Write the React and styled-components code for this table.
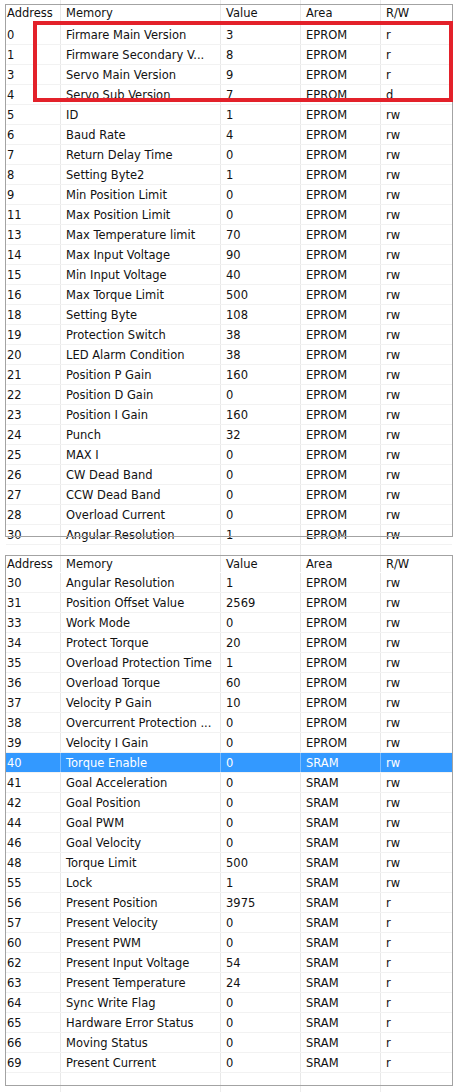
import React from "react";
import styled, { createGlobalStyle } from "styled-components";

const top = [
  ["0", "Firmare Main Version", "3", "EPROM", "r"],
  ["1", "Firmware Secondary V...", "8", "EPROM", "r"],
  ["3", "Servo Main Version", "9", "EPROM", "r"],
  ["4", "Servo Sub Version", "7", "EPROM", "d"],
  ["5", "ID", "1", "EPROM", "rw"],
  ["6", "Baud Rate", "4", "EPROM", "rw"],
  ["7", "Return Delay Time", "0", "EPROM", "rw"],
  ["8", "Setting Byte2", "1", "EPROM", "rw"],
  ["9", "Min Position Limit", "0", "EPROM", "rw"],
  ["11", "Max Position Limit", "0", "EPROM", "rw"],
  ["13", "Max Temperature limit", "70", "EPROM", "rw"],
  ["14", "Max Input Voltage", "90", "EPROM", "rw"],
  ["15", "Min Input Voltage", "40", "EPROM", "rw"],
  ["16", "Max Torque Limit", "500", "EPROM", "rw"],
  ["18", "Setting Byte", "108", "EPROM", "rw"],
  ["19", "Protection Switch", "38", "EPROM", "rw"],
  ["20", "LED Alarm Condition", "38", "EPROM", "rw"],
  ["21", "Position P Gain", "160", "EPROM", "rw"],
  ["22", "Position D Gain", "0", "EPROM", "rw"],
  ["23", "Position I Gain", "160", "EPROM", "rw"],
  ["24", "Punch", "32", "EPROM", "rw"],
  ["25", "MAX I", "0", "EPROM", "rw"],
  ["26", "CW Dead Band", "0", "EPROM", "rw"],
  ["27", "CCW Dead Band", "0", "EPROM", "rw"],
  ["28", "Overload Current", "0", "EPROM", "rw"],
  ["30", "Angular Resolution", "1", "EPROM", "rw"],
];

const bottom = [
  ["30", "Angular Resolution", "1", "EPROM", "rw"],
  ["31", "Position Offset Value", "2569", "EPROM", "rw"],
  ["33", "Work Mode", "0", "EPROM", "rw"],
  ["34", "Protect Torque", "20", "EPROM", "rw"],
  ["35", "Overload Protection Time", "1", "EPROM", "rw"],
  ["36", "Overload Torque", "60", "EPROM", "rw"],
  ["37", "Velocity P Gain", "10", "EPROM", "rw"],
  ["38", "Overcurrent Protection ...", "0", "EPROM", "rw"],
  ["39", "Velocity I Gain", "0", "EPROM", "rw"],
  ["40", "Torque Enable", "0", "SRAM", "rw"],
  ["41", "Goal Acceleration", "0", "SRAM", "rw"],
  ["42", "Goal Position", "0", "SRAM", "rw"],
  ["44", "Goal PWM", "0", "SRAM", "rw"],
  ["46", "Goal Velocity", "0", "SRAM", "rw"],
  ["48", "Torque Limit", "500", "SRAM", "rw"],
  ["55", "Lock", "1", "SRAM", "rw"],
  ["56", "Present Position", "3975", "SRAM", "r"],
  ["57", "Present Velocity", "0", "SRAM", "r"],
  ["60", "Present PWM", "0", "SRAM", "r"],
  ["62", "Present Input Voltage", "54", "SRAM", "r"],
  ["63", "Present Temperature", "24", "SRAM", "r"],
  ["64", "Sync Write Flag", "0", "SRAM", "r"],
  ["65", "Hardware Error Status", "0", "SRAM", "r"],
  ["66", "Moving Status", "0", "SRAM", "r"],
  ["69", "Present Current", "0", "SRAM", "r"],
];

const GlobalStyle = createGlobalStyle`
  body {
    margin: 0;
    background: #fff;
    font-family: "DejaVu Sans", Tahoma, sans-serif;
  }
`;

const line = (x) =>
  `linear-gradient(to right, transparent ${x}px, #ececec ${x}px, #ececec ${x + 1}px, transparent ${x + 1}px)`;

const Page = styled.div`
  position: relative;
  width: 459px;
  height: 1092px;
  padding-top: 4px;
  box-sizing: border-box;
  overflow: hidden;
  background-image: ${[60, 220, 300, 380].map(line).join(", ")};
`;

const Panel = styled.div`
  position: relative;
  margin-left: 5px;
  margin-top: ${(p) => p.$gap || 0}px;
  width: 448px;
  height: ${(p) => p.$h}px;
  box-sizing: border-box;
  border: 1px solid #a3a3a3;
  border-bottom: none;
  background: #fff;
  overflow: ${(p) => (p.$clip ? "hidden" : "visible")};

  &::after {
    content: "";
    position: absolute;
    left: -1px;
    right: -1px;
    bottom: 0;
    height: 1px;
    background: #a3a3a3;
  }
`;

const Row = styled.div`
  display: grid;
  grid-template-columns: 55px 160px 80px 80px 1fr;
  height: ${(p) => p.$h || 20}px;
  box-sizing: border-box;
  border-bottom: 1px solid ${(p) => (p.$head ? "transparent" : "#f2f2f2")};
  background: ${(p) => (p.$sel ? "#3399ff" : "transparent")};
  color: ${(p) => (p.$sel ? "#fff" : "#111")};
  font-size: 11.5px;
`;

const Cell = styled.div`
  display: flex;
  align-items: ${(p) => (p.$head ? "flex-start" : "center")};
  padding-left: ${(p) => (p.$first ? 1 : 5)}px;
  padding-top: 1px;
  box-sizing: border-box;
  border-right: 1px solid ${(p) => (p.$sel ? "rgba(255,255,255,0.35)" : "#e8e8e8")};
  white-space: nowrap;
  overflow: visible;

  &:last-child {
    border-right: none;
  }
`;

const Marker = styled.div`
  position: absolute;
  left: 33px;
  top: 21px;
  width: 420px;
  height: 81px;
  box-sizing: border-box;
  border: 4.5px solid #e3212a;
  pointer-events: none;
`;

const headers = ["Address", "Memory", "Value", "Area", "R/W"];

const TableRow = ({ cells, sel, head, h }) => (
  <Row $sel={sel} $head={head} $h={h}>
    {cells.map((c, i) => (
      <Cell key={i} $first={i === 0} $sel={sel} $head={head}>
        {c}
      </Cell>
    ))}
  </Row>
);

export default function App() {
  return (
    <>
      <GlobalStyle />
      <Page>
        <Panel $h={533}>
          <TableRow cells={headers} head h={20} />
          {top.map((r) => (
            <TableRow key={r[0] + r[1]} cells={r} />
          ))}
        </Panel>
        <Panel $h={531} $gap={18} $clip>
          <TableRow cells={headers} head h={17} />
          {bottom.map((r) => (
            <TableRow key={r[0] + r[1]} cells={r} sel={r[0] === "40"} />
          ))}
          <TableRow cells={["", "", "", "", ""]} />
        </Panel>
        <Marker />
      </Page>
    </>
  );
}
